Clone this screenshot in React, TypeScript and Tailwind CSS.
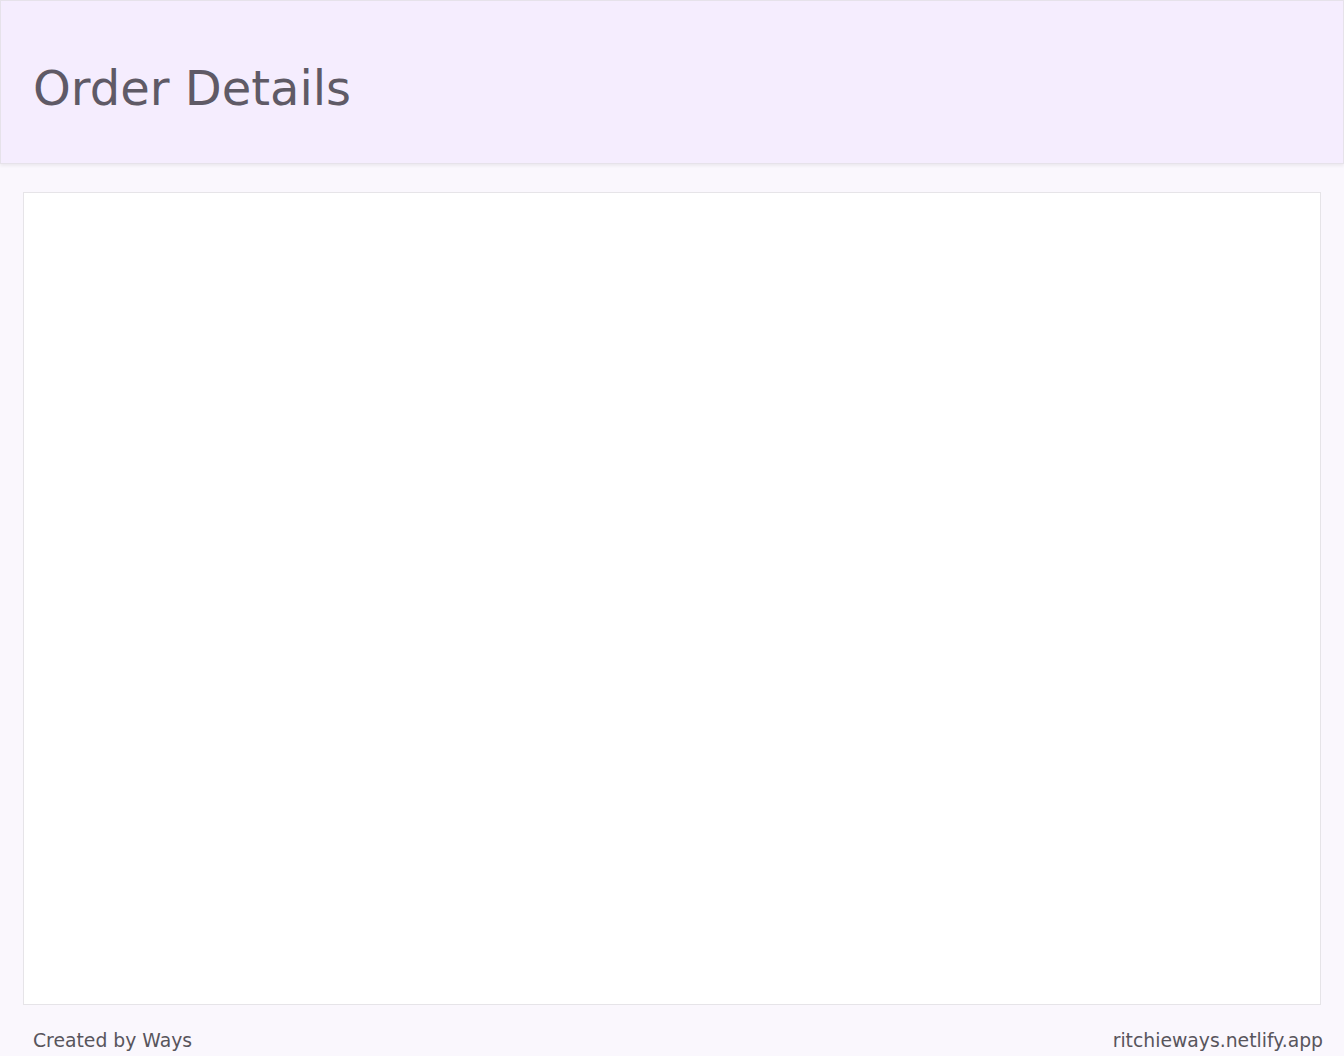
export default function App() {
  return (
    <div
      className="min-h-[1056px] w-full bg-[#faf7fd] flex flex-col"
      style={{ fontFamily: '"DejaVu Sans", Verdana, sans-serif' }}
    >
      <header className="h-[164px] bg-[#f5edfe] border border-[#e6e2ea] shadow-[0_2px_3px_rgba(0,0,0,0.06)] flex items-center px-[32px]">
        <h1 className="text-[48px] leading-none text-[#5f5a66] pt-[12px]">Order Details</h1>
      </header>
      <main className="px-[23px] pt-[28px]">
        <div className="h-[813px] bg-white border border-[#e6e4e8]"></div>
      </main>
      <footer className="flex justify-between pr-[21px] pl-[33px] pt-[27px] text-[18.8px] leading-none text-[#58555c]">
        <span>Created by Ways</span>
        <span>ritchieways.netlify.app</span>
      </footer>
    </div>
  );
}
